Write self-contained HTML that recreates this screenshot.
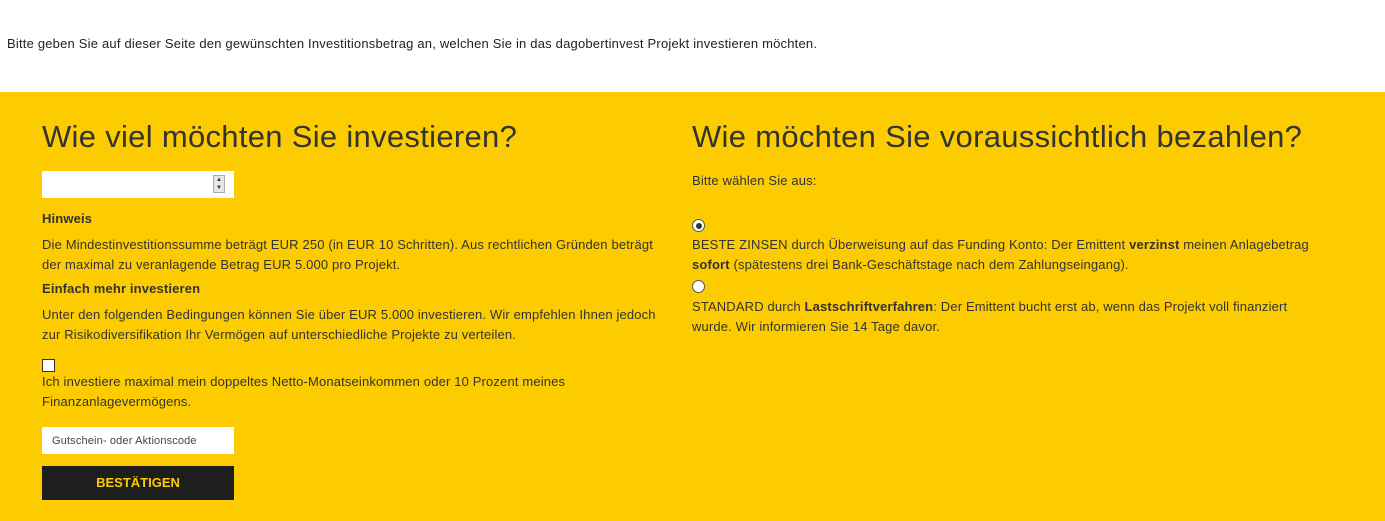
<!DOCTYPE html>
<html><head><meta charset="utf-8"><style>
body{margin:0;width:1385px;height:521px;overflow:hidden;background:#fff;font-family:"Liberation Sans",sans-serif;color:#333;position:relative}
.a{position:absolute;white-space:nowrap;font-size:13px;line-height:20px;letter-spacing:0.15px}
.y{position:absolute;left:0;top:92px;width:1385px;height:429px;background:#fdcc00}
h1{position:absolute;margin:0;font-weight:normal;font-size:31px;line-height:40px;white-space:nowrap;color:#333;letter-spacing:0.3px}
b{font-weight:bold}
.box{position:absolute;background:#fff}
.rad{position:absolute;width:11px;height:11px;border:1px solid #555;border-radius:50%;background:#fff}
</style></head><body>
<div class="a" style="left:7px;top:34px;color:#222;letter-spacing:0.2px">Bitte geben Sie auf dieser Seite den gewünschten Investitionsbetrag an, welchen Sie in das dagobertinvest Projekt investieren möchten.</div>
<div class="y"></div>
<h1 style="left:42px;top:117px">Wie viel möchten Sie investieren?</h1>
<h1 style="left:692px;top:117px">Wie möchten Sie voraussichtlich bezahlen?</h1>
<div class="box" style="left:42px;top:171px;width:192px;height:27px"></div>
<div style="position:absolute;left:213px;top:175px;width:10px;height:16px;background:#e6e6e6;border:1px solid #aaa;font-size:6px;line-height:8px;text-align:center">▲<br>▼</div>
<div class="a" style="left:42px;top:209px"><b>Hinweis</b></div>
<div class="a" style="left:42px;top:235px">Die Mindestinvestitionssumme beträgt EUR 250 (in EUR 10 Schritten). Aus rechtlichen Gründen beträgt<br>der maximal zu veranlagende Betrag EUR 5.000 pro Projekt.</div>
<div class="a" style="left:42px;top:279px"><b>Einfach mehr investieren</b></div>
<div class="a" style="left:42px;top:305px">Unter den folgenden Bedingungen können Sie über EUR 5.000 investieren. Wir empfehlen Ihnen jedoch<br>zur Risikodiversifikation Ihr Vermögen auf unterschiedliche Projekte zu verteilen.</div>
<div style="position:absolute;left:42px;top:359px;width:11px;height:11px;border:1px solid #333;background:#fff"></div>
<div class="a" style="left:42px;top:372px">Ich investiere maximal mein doppeltes Netto-Monatseinkommen oder 10 Prozent meines<br>Finanzanlagevermögens.</div>
<div class="box" style="left:42px;top:427px;width:192px;height:27px"></div>
<div class="a" style="left:52px;top:431px;font-size:11px;color:#444">Gutschein- oder Aktionscode</div>
<div style="position:absolute;left:42px;top:466px;width:192px;height:34px;background:#1e1e1e;color:#fdcc00;font-weight:bold;font-size:13px;line-height:34px;text-align:center">BESTÄTIGEN</div>
<div class="a" style="left:692px;top:171px">Bitte wählen Sie aus:</div>
<div class="rad" style="left:692px;top:219px"><div style="position:absolute;left:2.5px;top:2.5px;width:6px;height:6px;border-radius:50%;background:#333"></div></div>
<div class="a" style="left:692px;top:235px">BESTE ZINSEN durch Überweisung auf das Funding Konto: Der Emittent <b>verzinst</b> meinen Anlagebetrag<br><b>sofort</b> (spätestens drei Bank-Geschäftstage nach dem Zahlungseingang).</div>
<div class="rad" style="left:692px;top:280px"></div>
<div class="a" style="left:692px;top:297px">STANDARD durch <b>Lastschriftverfahren</b>: Der Emittent bucht erst ab, wenn das Projekt voll finanziert<br>wurde. Wir informieren Sie 14 Tage davor.</div>
</body></html>
